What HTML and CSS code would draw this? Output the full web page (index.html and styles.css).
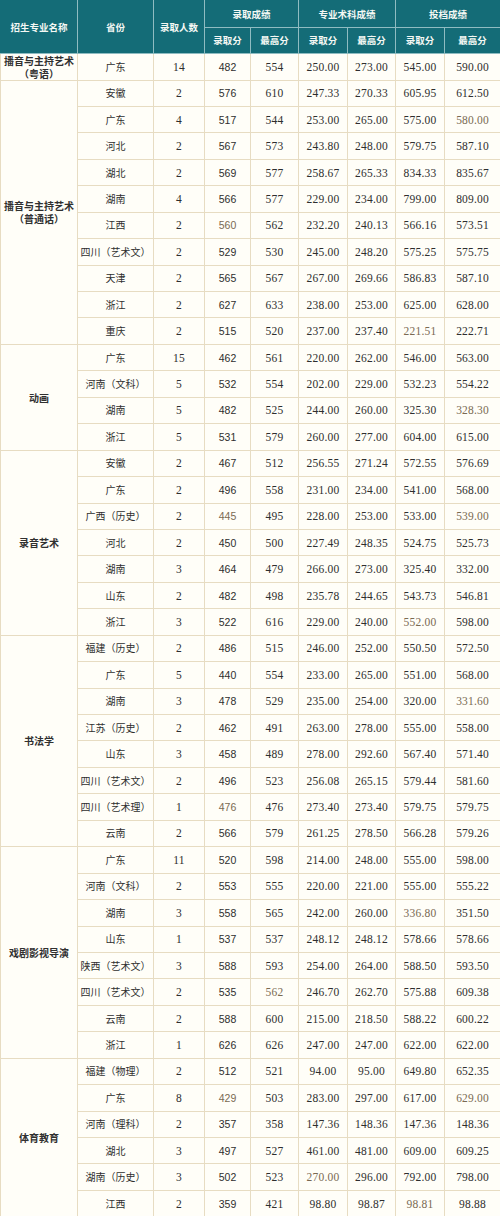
FILE: index.html
```html
<!DOCTYPE html>
<html lang="zh-CN">
<head>
<meta charset="utf-8">
<title>录取成绩</title>
<link rel="stylesheet" href="styles.css">
</head>
<body>
<table class="scores">
  <colgroup>
    <col class="c-major"><col class="c-prov"><col class="c-num"><col class="c-a"><col class="c-b"><col class="c-c"><col class="c-d"><col class="c-e"><col class="c-f">
  </colgroup>
  <thead>
    <tr class="h1">
      <th rowspan="2">招生专业名称</th>
      <th rowspan="2">省份</th>
      <th rowspan="2">录取人数</th>
      <th colspan="2">录取成绩</th>
      <th colspan="2">专业术科成绩</th>
      <th colspan="2">投档成绩</th>
    </tr>
    <tr class="h2">
      <th>录取分</th><th>最高分</th><th>录取分</th><th>最高分</th><th>录取分</th><th>最高分</th>
    </tr>
  </thead>
  <tbody>
    <tr><td class="major">播音与主持艺术<br>（粤语）</td><td>广东</td><td class="n">14</td><td class="s">482</td><td class="n">554</td><td class="n">250.00</td><td class="n">273.00</td><td class="n">545.00</td><td class="n">590.00</td></tr>

    <tr><td class="major" rowspan="10">播音与主持艺术<br>（普通话）</td><td>安徽</td><td class="n">2</td><td class="s">576</td><td class="n">610</td><td class="n">247.33</td><td class="n">270.33</td><td class="n">605.95</td><td class="n">612.50</td></tr>
    <tr><td>广东</td><td class="n">4</td><td class="s">517</td><td class="n">544</td><td class="n">253.00</td><td class="n">265.00</td><td class="n">575.00</td><td class="n faint">580.00</td></tr>
    <tr><td>河北</td><td class="n">2</td><td class="s">567</td><td class="n">573</td><td class="n">243.80</td><td class="n">248.00</td><td class="n">579.75</td><td class="n">587.10</td></tr>
    <tr><td>湖北</td><td class="n">2</td><td class="s">569</td><td class="n">577</td><td class="n">258.67</td><td class="n">265.33</td><td class="n">834.33</td><td class="n">835.67</td></tr>
    <tr><td>湖南</td><td class="n">4</td><td class="s">566</td><td class="n">577</td><td class="n">229.00</td><td class="n">234.00</td><td class="n">799.00</td><td class="n">809.00</td></tr>
    <tr><td>江西</td><td class="n">2</td><td class="s faint">560</td><td class="n">562</td><td class="n">232.20</td><td class="n">240.13</td><td class="n">566.16</td><td class="n">573.51</td></tr>
    <tr><td>四川（艺术文）</td><td class="n">2</td><td class="s">529</td><td class="n">530</td><td class="n">245.00</td><td class="n">248.20</td><td class="n">575.25</td><td class="n">575.75</td></tr>
    <tr><td>天津</td><td class="n">2</td><td class="s">565</td><td class="n">567</td><td class="n">267.00</td><td class="n">269.66</td><td class="n">586.83</td><td class="n">587.10</td></tr>
    <tr><td>浙江</td><td class="n">2</td><td class="s">627</td><td class="n">633</td><td class="n">238.00</td><td class="n">253.00</td><td class="n">625.00</td><td class="n">628.00</td></tr>
    <tr><td>重庆</td><td class="n">2</td><td class="s">515</td><td class="n">520</td><td class="n">237.00</td><td class="n">237.40</td><td class="n faint">221.51</td><td class="n">222.71</td></tr>

    <tr><td class="major" rowspan="4">动画</td><td>广东</td><td class="n">15</td><td class="s">462</td><td class="n">561</td><td class="n">220.00</td><td class="n">262.00</td><td class="n">546.00</td><td class="n">563.00</td></tr>
    <tr><td>河南（文科）</td><td class="n">5</td><td class="s">532</td><td class="n">554</td><td class="n">202.00</td><td class="n">229.00</td><td class="n">532.23</td><td class="n">554.22</td></tr>
    <tr><td>湖南</td><td class="n">5</td><td class="s">482</td><td class="n">525</td><td class="n">244.00</td><td class="n">260.00</td><td class="n">325.30</td><td class="n faint">328.30</td></tr>
    <tr><td>浙江</td><td class="n">5</td><td class="s">531</td><td class="n">579</td><td class="n">260.00</td><td class="n">277.00</td><td class="n">604.00</td><td class="n">615.00</td></tr>

    <tr><td class="major" rowspan="7">录音艺术</td><td>安徽</td><td class="n">2</td><td class="s">467</td><td class="n">512</td><td class="n">256.55</td><td class="n">271.24</td><td class="n">572.55</td><td class="n">576.69</td></tr>
    <tr><td>广东</td><td class="n">2</td><td class="s">496</td><td class="n">558</td><td class="n">231.00</td><td class="n">234.00</td><td class="n">541.00</td><td class="n">568.00</td></tr>
    <tr><td>广西（历史）</td><td class="n">2</td><td class="s faint">445</td><td class="n">495</td><td class="n">228.00</td><td class="n">253.00</td><td class="n">533.00</td><td class="n faint">539.00</td></tr>
    <tr><td>河北</td><td class="n">2</td><td class="s">450</td><td class="n">500</td><td class="n">227.49</td><td class="n">248.35</td><td class="n">524.75</td><td class="n">525.73</td></tr>
    <tr><td>湖南</td><td class="n">3</td><td class="s">464</td><td class="n">479</td><td class="n">266.00</td><td class="n">273.00</td><td class="n">325.40</td><td class="n">332.00</td></tr>
    <tr><td>山东</td><td class="n">2</td><td class="s">482</td><td class="n">498</td><td class="n">235.78</td><td class="n">244.65</td><td class="n">543.73</td><td class="n">546.81</td></tr>
    <tr><td>浙江</td><td class="n">3</td><td class="s">522</td><td class="n">616</td><td class="n">229.00</td><td class="n">240.00</td><td class="n faint">552.00</td><td class="n">598.00</td></tr>

    <tr><td class="major" rowspan="8">书法学</td><td>福建（历史）</td><td class="n">2</td><td class="s">486</td><td class="n">515</td><td class="n">246.00</td><td class="n">252.00</td><td class="n">550.50</td><td class="n">572.50</td></tr>
    <tr><td>广东</td><td class="n">5</td><td class="s">440</td><td class="n">554</td><td class="n">233.00</td><td class="n">265.00</td><td class="n">551.00</td><td class="n">568.00</td></tr>
    <tr><td>湖南</td><td class="n">3</td><td class="s">478</td><td class="n">529</td><td class="n">235.00</td><td class="n">254.00</td><td class="n">320.00</td><td class="n faint">331.60</td></tr>
    <tr><td>江苏（历史）</td><td class="n">2</td><td class="s">462</td><td class="n">491</td><td class="n">263.00</td><td class="n">278.00</td><td class="n">555.00</td><td class="n">558.00</td></tr>
    <tr><td>山东</td><td class="n">3</td><td class="s">458</td><td class="n">489</td><td class="n">278.00</td><td class="n">292.60</td><td class="n">567.40</td><td class="n">571.40</td></tr>
    <tr><td>四川（艺术文）</td><td class="n">2</td><td class="s">496</td><td class="n">523</td><td class="n">256.08</td><td class="n">265.15</td><td class="n">579.44</td><td class="n">581.60</td></tr>
    <tr><td>四川（艺术理）</td><td class="n">1</td><td class="s faint">476</td><td class="n">476</td><td class="n">273.40</td><td class="n">273.40</td><td class="n">579.75</td><td class="n">579.75</td></tr>
    <tr><td>云南</td><td class="n">2</td><td class="s">566</td><td class="n">579</td><td class="n">261.25</td><td class="n">278.50</td><td class="n">566.28</td><td class="n">579.26</td></tr>

    <tr><td class="major" rowspan="8">戏剧影视导演</td><td>广东</td><td class="n">11</td><td class="s">520</td><td class="n">598</td><td class="n">214.00</td><td class="n">248.00</td><td class="n">555.00</td><td class="n">598.00</td></tr>
    <tr><td>河南（文科）</td><td class="n">2</td><td class="s">553</td><td class="n">555</td><td class="n">220.00</td><td class="n">221.00</td><td class="n">555.00</td><td class="n">555.22</td></tr>
    <tr><td>湖南</td><td class="n">3</td><td class="s">558</td><td class="n">565</td><td class="n">242.00</td><td class="n">260.00</td><td class="n faint">336.80</td><td class="n">351.50</td></tr>
    <tr><td>山东</td><td class="n">1</td><td class="s">537</td><td class="n">537</td><td class="n">248.12</td><td class="n">248.12</td><td class="n">578.66</td><td class="n">578.66</td></tr>
    <tr><td>陕西（艺术文）</td><td class="n">3</td><td class="s">588</td><td class="n">593</td><td class="n">254.00</td><td class="n">264.00</td><td class="n">588.50</td><td class="n">593.50</td></tr>
    <tr><td>四川（艺术文）</td><td class="n">2</td><td class="s">535</td><td class="n faint">562</td><td class="n">246.70</td><td class="n">262.70</td><td class="n">575.88</td><td class="n">609.38</td></tr>
    <tr><td>云南</td><td class="n">2</td><td class="s">588</td><td class="n">600</td><td class="n">215.00</td><td class="n">218.50</td><td class="n">588.22</td><td class="n">600.22</td></tr>
    <tr><td>浙江</td><td class="n">1</td><td class="s">626</td><td class="n">626</td><td class="n">247.00</td><td class="n">247.00</td><td class="n">622.00</td><td class="n">622.00</td></tr>

    <tr><td class="major" rowspan="6">体育教育</td><td>福建（物理）</td><td class="n">2</td><td class="s">512</td><td class="n">521</td><td class="n">94.00</td><td class="n">95.00</td><td class="n">649.80</td><td class="n">652.35</td></tr>
    <tr><td>广东</td><td class="n">8</td><td class="s faint">429</td><td class="n">503</td><td class="n">283.00</td><td class="n">297.00</td><td class="n">617.00</td><td class="n faint">629.00</td></tr>
    <tr><td>河南（理科）</td><td class="n">2</td><td class="s">357</td><td class="n">358</td><td class="n">147.36</td><td class="n">148.36</td><td class="n">147.36</td><td class="n">148.36</td></tr>
    <tr><td>湖北</td><td class="n">3</td><td class="s">497</td><td class="n">527</td><td class="n">461.00</td><td class="n">481.00</td><td class="n">609.00</td><td class="n">609.25</td></tr>
    <tr><td>湖南（历史）</td><td class="n">3</td><td class="s">502</td><td class="n">523</td><td class="n faint">270.00</td><td class="n">296.00</td><td class="n">792.00</td><td class="n">798.00</td></tr>
    <tr><td>江西</td><td class="n">2</td><td class="s">359</td><td class="n">421</td><td class="n">98.80</td><td class="n">98.87</td><td class="n faint">98.81</td><td class="n">98.88</td></tr>
  </tbody>
</table>
</body>
</html>
```

FILE: styles.css
```css
html, body {
  margin: 0;
  padding: 0;
  background: #fffef8;
}

.scores {
  width: 500px;
  table-layout: fixed;
  border-collapse: collapse;
  font-family: "Noto Sans CJK SC", "Liberation Serif", serif;
  font-size: 10px;
  color: #2e2e2e;
  background: #fffef8;
}

.c-major { width: 77px; }
.c-prov { width: 76px; }
.c-num { width: 51px; }
.c-a { width: 46px; }
.c-b { width: 48px; }
.c-c { width: 49px; }
.c-d { width: 48px; }
.c-e { width: 49px; }
.c-f { width: 56px; }

.scores th {
  background: #146c77;
  color: #f4f8f4;
  font-weight: 700;
  font-size: 9.5px;
  border: 1px solid #8fbcc1;
  padding: 0;
  text-align: center;
  vertical-align: middle;
}

.scores thead tr:first-child th {
  border-top-color: #146c77;
}

.scores thead th:first-child {
  border-left-color: #146c77;
}

.scores thead th:last-child {
  border-right-color: #146c77;
}

.h1 { height: 27px; }
.h2 { height: 25.5px; }

.scores tbody tr { height: 26.45px; }

.scores td {
  border: 1px solid #e7dcc2;
  padding: 0;
  text-align: center;
  vertical-align: middle;
  line-height: 12px;
  white-space: nowrap;
}

.scores td:last-child {
  border-right-color: #fffef8;
}

.scores td.major {
  font-weight: 700;
  color: #303030;
  line-height: 13px;
}

.scores td.n {
  font-family: "Liberation Serif", "Noto Sans CJK SC", serif;
  font-size: 11.5px;
  letter-spacing: 0.2px;
}

.scores td.s {
  font-family: "Liberation Sans", "Noto Sans CJK SC", sans-serif;
  font-size: 10.5px;
}

.scores td.faint {
  color: #7a6a52;
}
```
